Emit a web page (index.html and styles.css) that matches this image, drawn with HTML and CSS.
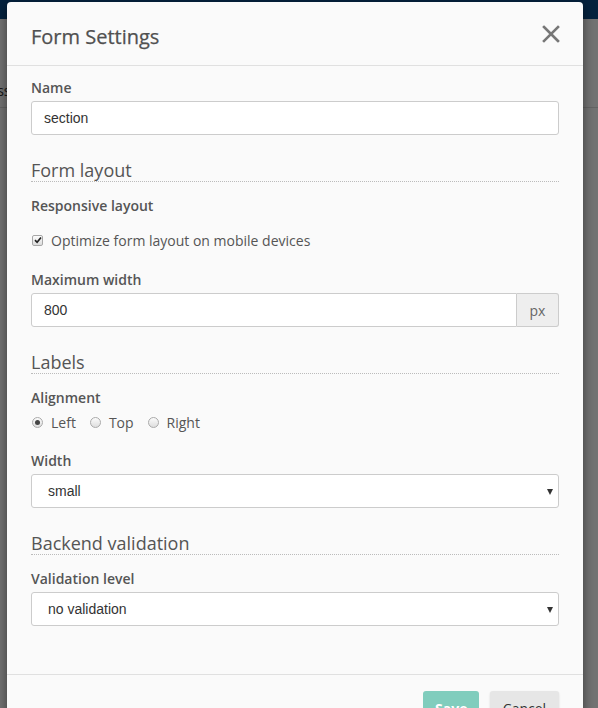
FILE: index.html
```html
<!DOCTYPE html>
<html>
<head>
<meta charset="utf-8">
<link rel="stylesheet" href="styles.css">
</head>
<body>
<div class="page">
  <div class="navbar"></div>
  <div class="subbar"><span class="ghost">Process</span></div>
</div>
<div class="backdrop"></div>
<div class="modal">
  <div class="modal-header">
    <h4 class="modal-title">Form Settings</h4>
    <button class="close" type="button" aria-label="Close">
      <svg width="18" height="18" viewBox="0 0 18 18"><path d="M2 2 L16 16 M16 2 L2 16" stroke="#777" stroke-width="2.6" stroke-linecap="square"/></svg>
    </button>
  </div>
  <div class="modal-body">
    <div class="form-group">
      <label class="control-label">Name</label>
      <input class="form-control" type="text" value="section">
    </div>

    <h5 class="section">Form layout</h5>
    <div class="form-group fg-check">
      <label class="control-label">Responsive layout</label>
      <div class="checkbox">
        <span class="cb"><svg width="8" height="8" viewBox="0 0 8 8"><path d="M1 4.2 L3.1 6.3 L7 1.5" fill="none" stroke="#222" stroke-width="1.7"/></svg></span>
        <span>Optimize form layout on mobile devices</span>
      </div>
    </div>
    <div class="form-group">
      <label class="control-label">Maximum width</label>
      <div class="input-group">
        <input class="form-control grow" type="text" value="800">
        <span class="addon">px</span>
      </div>
    </div>

    <h5 class="section">Labels</h5>
    <div class="form-group fg-radio">
      <label class="control-label">Alignment</label>
      <div class="radios">
        <span class="radio"><span class="rd on"></span>Left</span>
        <span class="radio"><span class="rd"></span>Top</span>
        <span class="radio"><span class="rd"></span>Right</span>
      </div>
    </div>
    <div class="form-group">
      <label class="control-label">Width</label>
      <div class="select"><span>small</span><i class="caret"></i></div>
    </div>

    <h5 class="section">Backend validation</h5>
    <div class="form-group">
      <label class="control-label">Validation level</label>
      <div class="select"><span>no validation</span><i class="caret"></i></div>
    </div>
  </div>
  <div class="modal-footer">
    <button class="btn btn-save" type="button">Save</button>
    <button class="btn btn-cancel" type="button">Cancel</button>
  </div>
</div>
</body>
</html>
```
FILE: styles.css
```css
* { box-sizing: border-box; }
html, body { margin: 0; padding: 0; }
body {
  width: 598px;
  height: 708px;
  overflow: hidden;
  position: relative;
  background: #fff;
  font-family: "Open Sans", "Liberation Sans", sans-serif;
  font-size: 14px;
  color: #555;
}
.page { height: 708px; }
.navbar { height: 19px; background: #0a4c8a; }
.subbar {
  height: 89px;
  border-bottom: 1px solid #ddd;
  padding: 62px 0 0 0;
  font-size: 14px;
  color: #333;
}
.ghost { margin-left: -40px; }
.backdrop {
  position: absolute;
  left: 0; top: 0; right: 0; bottom: 0;
  background: rgba(0, 0, 0, 0.55);
}
.modal {
  position: absolute;
  left: 7px;
  top: 2px;
  width: 576px;
  height: 760px;
  background: #fafafa;
  border-radius: 4px 4px 0 0;
  box-shadow: 0 3px 12px rgba(0, 0, 0, 0.5);
}
.modal-header {
  display: flex;
  align-items: center;
  justify-content: space-between;
  height: 64px;
  padding: 0 24px;
  border-bottom: 1px solid #e0e0e0;
}
.modal-title {
  margin: 6px 0 0 0;
  font-size: 20px;
  font-weight: 400;
  color: #505050;
  -webkit-text-stroke: 0.25px #505050;
}
.close {
  border: 0;
  background: none;
  padding: 0;
  margin: 0 -1px 0 0;
  width: 18px;
  height: 18px;
  display: flex;
}
.modal-body {
  padding: 12px 24px 33px 24px;
}
.form-group { margin-bottom: 15px; }
.control-label {
  display: block;
  font-weight: 600;
  line-height: 20px;
  margin-bottom: 3px;
  color: #555;
}
.form-control {
  display: block;
  width: 100%;
  height: 34px;
  border: 1px solid #ccc;
  border-radius: 3px;
  background: #fff;
  padding: 0 12px;
  font-family: "Liberation Sans", Arial, sans-serif;
  font-size: 14px;
  color: #333;
  outline: none;
}
.section {
  margin: 25px 0 14px 0;
  padding-bottom: 1px;
  font-size: 18px;
  font-weight: 400;
  line-height: 20px;
  color: #555;
  border-bottom: 1px dotted #bbb;
}
.checkbox {
  display: flex;
  align-items: center;
  margin-top: 14px;
  height: 20px;
  padding-left: 1px;
}
.cb {
  width: 11px;
  height: 11px;
  border: 1px solid #a7a7a7;
  border-radius: 2px;
  background: linear-gradient(#fcfcfc, #dcdcdc);
  display: flex;
  align-items: center;
  justify-content: center;
  margin-right: 8px;
}
.fg-check { margin-bottom: 20px; }
.input-group { display: flex; }
.input-group .grow {
  flex: 1;
  border-radius: 3px 0 0 3px;
}
.addon {
  width: 42px;
  height: 34px;
  display: flex;
  align-items: center;
  justify-content: center;
  background: #eee;
  border: 1px solid #ccc;
  border-left: 0;
  border-radius: 0 3px 3px 0;
  color: #666;
}
.radios {
  display: flex;
  height: 20px;
  align-items: center;
  margin-top: 4px;
  padding-left: 1px;
}
.radio {
  display: flex;
  align-items: center;
  margin-right: 14px;
}
.rd {
  width: 11px;
  height: 11px;
  border-radius: 50%;
  border: 1px solid #aaa;
  background: linear-gradient(#fbfbfb, #dedede);
  margin-right: 8px;
  display: flex;
  align-items: center;
  justify-content: center;
}
.rd.on::after {
  content: "";
  width: 5px;
  height: 5px;
  border-radius: 50%;
  background: #444;
}
.fg-radio { margin-bottom: 19px; }
.select {
  display: flex;
  align-items: center;
  justify-content: space-between;
  height: 34px;
  border: 1px solid #ccc;
  border-radius: 3px;
  background: #fff;
  padding: 0 5px 0 16px;
  font-family: "Liberation Sans", Arial, sans-serif;
  font-size: 14px;
  color: #333;
}
.caret {
  width: 0;
  height: 0;
  border-left: 3.5px solid transparent;
  border-right: 3.5px solid transparent;
  border-top: 6px solid #333;
  margin-top: 1px;
}
.modal-footer {
  border-top: 1px solid #e0e0e0;
  padding: 16px 24px 0 0;
  display: flex;
  justify-content: flex-end;
  gap: 11px;
}
.btn {
  height: 34px;
  border: 0;
  border-radius: 3px;
  font-family: "Open Sans", sans-serif;
  font-size: 14px;
  padding: 0 12px;
}
.btn-save {
  width: 56px;
  background: #80cdbd;
  color: #fff;
  font-weight: 700;
}
.btn-cancel {
  width: 69px;
  background: #e6e6e6;
  color: #333;
  box-shadow: 0 1px 2px rgba(0,0,0,0.15);
}
```
